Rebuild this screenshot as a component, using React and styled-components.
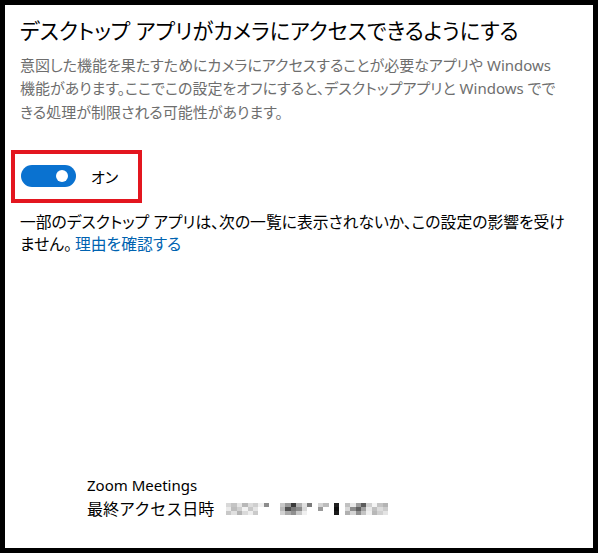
import React from 'react';
import styled, { createGlobalStyle } from 'styled-components';

const GlobalStyle = createGlobalStyle`
  html, body {
    margin: 0;
    padding: 0;
    background: #fff;
  }
  body {
    font-family: "Noto Sans", "Noto Sans CJK JP", sans-serif;
  }
`;

const Frame = styled.div`
  box-sizing: border-box;
  width: 598px;
  height: 553px;
  border: 5px solid #000;
  background: #fff;
  display: flex;
  flex-direction: column;
  padding: 11px 15px 0 15px;
  font-feature-settings: "palt";
`;

const Title = styled.h1`
  margin: 0;
  font-size: 21.2px;
  line-height: 30px;
  font-weight: 400;
  color: #000;
  white-space: nowrap;
`;

const Description = styled.p`
  margin: 8px 0 0;
  font-size: 15px;
  line-height: 23.3px;
  color: #6e6e6e;
  white-space: nowrap;
`;

const ToggleRow = styled.div`
  align-self: flex-start;
  display: flex;
  align-items: center;
  gap: 15px;
  height: 45px;
  width: 117px;
  margin: 26px 0 0 -9px;
  padding-left: 6px;
  border: 4px solid #e3161f;
`;

const Switch = styled.div`
  position: relative;
  width: 55px;
  height: 22px;
  border-radius: 11px;
  background: ${({ on }) => (on ? '#0a72d0' : '#fff')};
  flex-shrink: 0;

  &::after {
    content: '';
    position: absolute;
    top: 5px;
    right: 8px;
    width: 12px;
    height: 12px;
    border-radius: 50%;
    background: #fff;
  }
`;

const SwitchLabel = styled.span`
  font-size: 15px;
  color: #000;
`;

const Note = styled.p`
  margin: 8px 0 0;
  font-size: 15.8px;
  line-height: 22px;
  color: #000;
  white-space: nowrap;
`;

const Link = styled.a`
  color: #0063b1;
  text-decoration: none;
  margin-left: 3px;
`;

const Spacer = styled.div`
  flex: 1;
`;

const AppEntry = styled.div`
  display: flex;
  flex-direction: column;
  padding: 0 0 27px 67px;
`;

const AppName = styled.div`
  font-size: 15px;
  line-height: 24px;
  color: #000;
`;

const AccessRow = styled.div`
  display: flex;
  align-items: center;
  gap: 12px;
  font-size: 16px;
  line-height: 24px;
  color: #000;
  font-feature-settings: normal;
`;

// pixelated timestamp (censored in the original)
const mosaic = [
  ['#d8d8d8', '#c4c4c4', '#e6e6e6', '#b8b8b8', '#dcdcdc', '#cfcfcf', '#f0f0f0', '#8c8c8c', '#ffffff', '#ffffff', '#c8c8c8', '#9a9a9a', '#3a3a3a', '#b0b0b0', '#e0e0e0', '#7a7a7a', '#ffffff', '#d4d4d4', '#bcbcbc', '#ffffff', '#202020', '#ffffff', '#c0c0c0', '#e8e8e8', '#9c9c9c', '#5c5c5c', '#d0d0d0', '#f4f4f4', '#c4c4c4', '#b4b4b4'],
  ['#eaeaea', '#bdbdbd', '#d0d0d0', '#f2f2f2', '#c8c8c8', '#e4e4e4', '#ffffff', '#ffffff', '#ffffff', '#ffffff', '#b8b8b8', '#505050', '#787878', '#8a8a8a', '#d8d8d8', '#ffffff', '#ffffff', '#9a9a9a', '#ffffff', '#ffffff', '#101010', '#ffffff', '#d8d8d8', '#8c8c8c', '#606060', '#a0a0a0', '#e8e8e8', '#c0c0c0', '#dcdcdc', '#cccccc'],
  ['#c8c8c8', '#e0e0e0', '#b4b4b4', '#dadada', '#eeeeee', '#cacaca', '#ffffff', '#ffffff', '#ffffff', '#ffffff', '#d2d2d2', '#aaaaaa', '#909090', '#c8c8c8', '#f0f0f0', '#ffffff', '#ffffff', '#ffffff', '#ffffff', '#ffffff', '#1a1a1a', '#ffffff', '#b0b0b0', '#d4d4d4', '#909090', '#c4c4c4', '#f0f0f0', '#b8b8b8', '#d0d0d0', '#e4e4e4'],
];

const Mosaic = () => (
  <svg width="162" height="12" viewBox="0 0 162 12" shapeRendering="crispEdges">
    {mosaic.map((row, r) =>
      row.map((c, i) => (
        <rect key={`${r}-${i}`} x={i * 5.4} y={r * 4} width="5.4" height="4" fill={c} />
      ))
    )}
  </svg>
);

const App = () => {
  return (
    <>
      <GlobalStyle />
      <Frame>
        <Title>デスクトップ アプリがカメラにアクセスできるようにする</Title>
        <Description>
          意図した機能を果たすためにカメラにアクセスすることが必要なアプリや Windows
          <br />
          機能があります。ここでこの設定をオフにすると、デスクトップアプリと Windows でで
          <br />
          きる処理が制限される可能性があります。
        </Description>

        <ToggleRow>
          <Switch on />
          <SwitchLabel>オン</SwitchLabel>
        </ToggleRow>

        <Note>
          一部のデスクトップ アプリは、次の一覧に表示されないか、この設定の影響を受け
          <br />
          ません。<Link href="#">理由を確認する</Link>
        </Note>

        <Spacer />

        <AppEntry>
          <AppName>Zoom Meetings</AppName>
          <AccessRow>
            最終アクセス日時
            <Mosaic />
          </AccessRow>
        </AppEntry>
      </Frame>
    </>
  );
};

export default App;
